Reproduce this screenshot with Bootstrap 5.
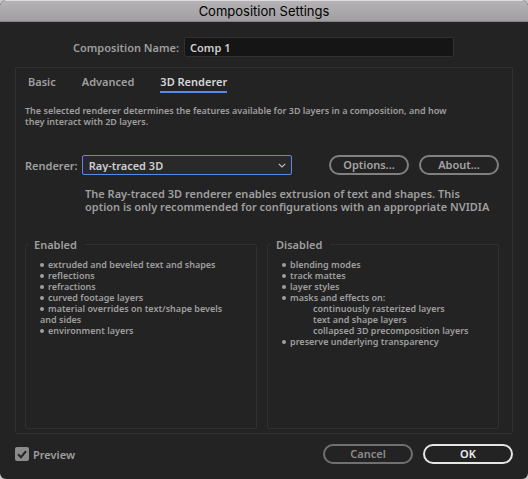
<!DOCTYPE html>
<html lang="en">
<head>
<meta charset="utf-8">
<meta name="viewport" content="width=device-width, initial-scale=1">
<title>Composition Settings</title>
<link rel="stylesheet" href="https://cdn.jsdelivr.net/npm/bootstrap@5.3.0/dist/css/bootstrap.min.css">
<style>
body { background: #c9c9c9; color: #9f9f9f; font: 600 11px/13px "Noto Sans", sans-serif; }
.dialog-window { background: #232323; border-radius: 6px; overflow: hidden; }
.title-bar { background: linear-gradient(#b5b3b5, #a09ea0); border-top: 1px solid #dcdcdc; border-bottom: 1px solid #858385; color: #000; height: 22px; font: 400 13px/20px Inter, sans-serif; }
.name-row { padding: 15px 74px 10px 73px; gap: 5px; }
.dialog-window .form-control, .dialog-window .form-select { height: 20px; min-height: 0; font: inherit; border-radius: 2px; padding: 0 5px; color: #cecece; }
.dialog-window .form-control { background: #151515; border: 1px solid #303030; }
.dialog-window .form-select { background: #292929 url("data:image/svg+xml,%3Csvg xmlns='http://www.w3.org/2000/svg' viewBox='0 0 8 5'%3E%3Cpath d='M.8.8 4 4 7.2.8' fill='none' stroke='%23bcbcbc' stroke-width='1.2'/%3E%3C/svg%3E") no-repeat right 5px center / 8px 5px; border: 1px solid #588be8; padding: 0 20px 0 6px; box-shadow: none; }
.settings-panel { border: 1px solid #303030; border-radius: 2px; margin: 0 15px; padding: 5px 13px 4px 9px; }
.tab-row { gap: 26px; padding-left: 3px; margin-bottom: 12px; }
.dialog-window .nav-link { color: inherit; padding: 2px 0 2px; border: 0; border-bottom: 2px solid transparent; border-radius: 0; line-height: 14px; }
.dialog-window .nav-link.active { color: #d6d6d6; border-bottom-color: #588be8; }
.fine-text { font-size: 9px; line-height: 11px; }
.renderer-row { margin-top: 28px; gap: 4px; }
.select-wrap { flex: 0 1 210px; }
.button-pair { gap: 10px; }
.pill { --bs-btn-padding-y: 0; --bs-btn-padding-x: 8px; --bs-btn-color: #a3a3a3; --bs-btn-border-color: #808080; --bs-btn-hover-color: #fff; --bs-btn-hover-border-color: #bbb; border-width: 2px; height: 20px; width: 80px; font: inherit; line-height: 16px; }
.pill-wide { width: 90px; }
.pill-quiet { --bs-btn-border-color: #707070; --bs-btn-color: #8c8c8c; }
.pill-main { --bs-btn-border-color: #e6e6e6; --bs-btn-color: #f0f0f0; }
.about-text { margin: 12px 0 25px 60px; }
.feature-groups { gap: 10px; }
.feature-box { border: 1px solid #303030; border-radius: 2px; flex: 1 1 0; min-height: 190px; padding: 0 14px 8px; }
.feature-box legend { font: inherit; padding: 0 8px 0 5px; margin: 0 0 8px -11px; }
.feature-box li::before { content: ""; display: inline-block; width: 4px; height: 4px; border-radius: 50%; background: currentColor; margin: 0 4px 1px 0; }
.feature-box li li { padding-left: 31px; }
.feature-box li li::before { content: none; }
.footer-row { padding: 10px 15px 15px; gap: 10px; }
.dialog-window .form-check-input { width: 14px; height: 14px; border: 0; border-radius: 2px; margin: 0; }
.dialog-window .form-check-input:checked { background: #8b8b8b url("data:image/svg+xml,%3Csvg xmlns='http://www.w3.org/2000/svg' viewBox='0 0 14 14'%3E%3Cpath d='m3 7.2 3 3 5-6' fill='none' stroke='%23232323' stroke-width='2'/%3E%3C/svg%3E") center / 14px 14px; }
</style>
<script src="https://cdn.jsdelivr.net/npm/bootstrap@5.3.0/dist/js/bootstrap.bundle.min.js"></script>
</head>
<body>
<main class="dialog-window d-flex flex-column min-vh-100">
  <h1 class="title-bar text-center m-0">Composition Settings</h1>
  <div class="name-row d-flex align-items-center">
    <label for="compName" class="text-nowrap">Composition Name:</label>
    <input id="compName" type="text" class="form-control" value="Comp 1">
  </div>
  <section class="settings-panel flex-grow-1 d-flex flex-column">
    <div class="nav tab-row" role="tablist">
      <button type="button" class="nav-link bg-transparent" role="tab" aria-selected="false">Basic</button>
      <button type="button" class="nav-link bg-transparent" role="tab" aria-selected="false">Advanced</button>
      <button type="button" class="nav-link bg-transparent active" role="tab" aria-selected="true">3D Renderer</button>
    </div>
    <p class="fine-text mb-0">The selected renderer determines the features available for 3D layers in a composition, and how<br>they interact with 2D layers.</p>
    <div class="renderer-row d-flex align-items-center">
      <label for="renderer">Renderer:</label>
      <div class="select-wrap">
        <select id="renderer" class="form-select"><option>Ray-traced 3D</option></select>
      </div>
      <div class="button-pair d-flex ms-auto">
        <button type="button" class="btn pill rounded-pill">Options...</button>
        <button type="button" class="btn pill rounded-pill">About...</button>
      </div>
    </div>
    <p class="about-text">The Ray-traced 3D renderer enables extrusion of text and shapes. This<br>option is only recommended for configurations with an appropriate NVIDIA</p>
    <div class="feature-groups d-flex flex-grow-1">
      <fieldset class="feature-box">
        <legend class="float-none w-auto">Enabled</legend>
        <ul class="list-unstyled fine-text mb-0">
          <li>extruded and beveled text and shapes</li>
          <li>reflections</li>
          <li>refractions</li>
          <li>curved footage layers</li>
          <li>material overrides on text/shape bevels<br>and sides</li>
          <li>environment layers</li>
        </ul>
      </fieldset>
      <fieldset class="feature-box">
        <legend class="float-none w-auto">Disabled</legend>
        <ul class="list-unstyled fine-text mb-0">
          <li>blending modes</li>
          <li>track mattes</li>
          <li>layer styles</li>
          <li>masks and effects on:
            <ul class="list-unstyled">
              <li>continuously rasterized layers</li>
              <li>text and shape layers</li>
              <li>collapsed 3D precomposition layers</li>
            </ul>
          </li>
          <li>preserve underlying transparency</li>
        </ul>
      </fieldset>
    </div>
  </section>
  <footer class="footer-row d-flex align-items-center">
    <div class="d-flex align-items-center me-auto">
      <input id="preview" type="checkbox" class="form-check-input" checked>
      <label for="preview" class="ms-1">Preview</label>
    </div>
    <button type="button" class="btn pill pill-wide pill-quiet rounded-pill">Cancel</button>
    <button type="button" class="btn pill pill-wide pill-main rounded-pill">OK</button>
  </footer>
</main>
</body>
</html>
